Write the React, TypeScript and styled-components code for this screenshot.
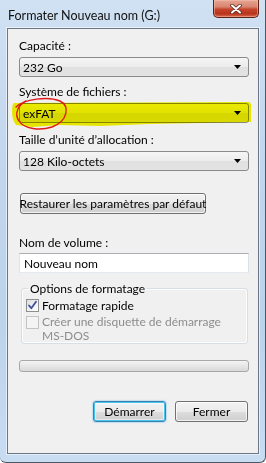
import styled, { createGlobalStyle } from 'styled-components';

const GlobalStyle = createGlobalStyle`
  html, body {
    margin: 0;
    padding: 0;
    background: #ffffff;
  }
  body {
    font-family: Lato, "Open Sans", "Liberation Sans", sans-serif;
    font-size: 12px;
  }
`;

const ComboArrow = () => (
  <svg width="7" height="4" viewBox="0 0 7 4">
    <path d="M0 0 H7 L3.5 4 Z" fill="#000" />
  </svg>
);

const CheckMark = () => (
  <svg width="11" height="11" viewBox="0 0 11 11">
    <path
      d="M2 5.5 L4.3 8.2 L9 1.8"
      fill="none"
      stroke="#3c4fa0"
      strokeWidth="1.8"
      strokeLinecap="round"
      strokeLinejoin="round"
    />
  </svg>
);

const CloseGlyph = () => (
  <svg width="12" height="10" viewBox="0 0 12 10">
    <path
      d="M2 1.5 L10 8.5 M10 1.5 L2 8.5"
      stroke="#5a2a22"
      strokeWidth="3.6"
      strokeLinecap="round"
    />
    <path
      d="M2 1.5 L10 8.5 M10 1.5 L2 8.5"
      stroke="#ffffff"
      strokeWidth="2"
      strokeLinecap="round"
    />
  </svg>
);

const App = () => {
  return (
    <>
      <GlobalStyle />
      <Window>
        <TitleBar>
          <Title>Formater Nouveau nom (G:)</Title>
          <CloseButton>
            <CloseGlyph />
          </CloseButton>
        </TitleBar>
        <Panel>
          <Label>Capacité :</Label>
          <Combo>
            <span>232 Go</span>
            <ComboArrow />
          </Combo>
          <Label $mt={7}>Système de fichiers :</Label>
          <Combo>
            <span>exFAT</span>
            <ComboArrow />
          </Combo>
          <Label $mt={9}>Taille d’unité d’allocation :</Label>
          <Combo>
            <span>128 Kilo-octets</span>
            <ComboArrow />
          </Combo>
          <RestoreRow>
            <Button $width={186}>Restaurer les paramètres par défaut</Button>
          </RestoreRow>
          <Label $mt={21}>Nom de volume :</Label>
          <TextBox>Nouveau nom</TextBox>
          <Group>
            <Legend>Options de formatage</Legend>
            <CheckRow>
              <CheckBox $checked>
                <CheckMark />
              </CheckBox>
              <CheckText>Formatage rapide</CheckText>
            </CheckRow>
            <CheckRow $disabled>
              <CheckBox $disabled />
              <CheckText>
                Créer une disquette de démarrage
                <br />
                MS-DOS
              </CheckText>
            </CheckRow>
          </Group>
          <Progress />
          <ButtonRow>
            <Button $width={73} $default>
              Démarrer
            </Button>
            <Button $width={73}>Fermer</Button>
          </ButtonRow>
        </Panel>
        {/* annotations drawn over the screenshot */}
        <Marks width="266" height="463" viewBox="0 0 266 463">
          <path
            d="M14 103 L249 102 Q252 103 251 110 L251 122 L200 123 L150 124 L100 126 L60 125 L32 127 L16 125 Q12 120 12 112 Q12 104 14 103 Z"
            fill="#f4f400"
            style={{ mixBlendMode: 'multiply' }}
          />
          <path
            d="M16 107 C24 99 48 96 60 101 C70 106 68 121 52 127 C40 131 24 129 19 121 C14 114 18 105 26 101"
            fill="none"
            stroke="#e01818"
            strokeWidth="1.4"
            strokeLinecap="round"
          />
        </Marks>
      </Window>
    </>
  );
};

export default App;

const Window = styled.div`
  position: relative;
  width: 266px;
  height: 463px;
  box-sizing: border-box;
  display: flex;
  flex-direction: column;
  padding: 0 6px 8px 7px;
  background: linear-gradient(180deg, #d0e1f3 0%, #c3d7ee 30%, #bcd3ec 70%, #c8dcf2 100%);
  border-right: 1px solid #4d5866;
  border-bottom: 1px solid #4d5866;
  border-bottom-right-radius: 6px;
  border-bottom-left-radius: 6px;
  overflow: hidden;
  color: #000;
`;

const TitleBar = styled.div`
  height: 28px;
  flex: none;
  display: flex;
  justify-content: space-between;
  align-items: flex-start;
`;

const Title = styled.div`
  padding: 8px 0 0 1px;
  line-height: 15px;
  font-size: 12.5px;
  color: #101010;
`;

const CloseButton = styled.div`
  width: 46px;
  height: 18px;
  box-sizing: border-box;
  border: 1px solid #5b2117;
  border-top: none;
  border-radius: 0 0 5px 5px;
  background: linear-gradient(180deg, #e6a595 0%, #d98570 40%, #c6442c 55%, #b8341d 80%, #d9684a 100%);
  box-shadow: inset 0 0 0 1px rgba(255, 200, 180, 0.45);
  display: flex;
  align-items: center;
  justify-content: center;
`;

const Panel = styled.div`
  flex: 1;
  display: flex;
  flex-direction: column;
  border: 1px solid #6b7785;
  background: #f0f0f0;
  padding: 9px 9px 0 11px;
  box-shadow: 0 0 0 1px rgba(255, 255, 255, 0.55);
`;

const Label = styled.div<{ $mt?: number }>`
  margin-top: ${(p) => p.$mt ?? 0}px;
  height: 15px;
  line-height: 15px;
`;

const Combo = styled.div`
  margin-top: 4px;
  height: 20px;
  box-sizing: border-box;
  display: flex;
  align-items: center;
  justify-content: space-between;
  padding: 0 7px 0 3px;
  border: 1px solid #8a8a8a;
  border-radius: 3px;
  background: linear-gradient(180deg, #f5f5f5 0%, #ececec 50%, #e0e0e0 52%, #e3e3e3 100%);
`;

const RestoreRow = styled.div`
  margin-top: 22px;
  display: flex;
`;

const Button = styled.div<{ $width: number; $default?: boolean }>`
  width: ${(p) => p.$width}px;
  height: 21px;
  box-sizing: border-box;
  display: flex;
  align-items: center;
  justify-content: center;
  white-space: nowrap;
  margin-left: 1px;
  border: 1px solid ${(p) => (p.$default ? '#3c7fb1' : '#707070')};
  border-radius: 3px;
  background: linear-gradient(180deg, #f2f2f2 0%, #ebebeb 50%, #dddddd 51%, #cfcfcf 100%);
  box-shadow: ${(p) =>
    p.$default
      ? 'inset 0 0 0 1px #48c5ef, inset 0 0 0 2px rgba(255,255,255,0.5), 0 0 1px 1px rgba(140,200,235,0.45)'
      : 'inset 0 0 0 1px rgba(255,255,255,0.75)'};
`;

const TextBox = styled.div`
  margin-top: 3px;
  height: 20px;
  box-sizing: border-box;
  display: flex;
  align-items: center;
  padding: 0 4px;
  background: #ffffff;
  border: 1px solid #abadb3;
  border-bottom-color: #e3e9ef;
  border-left-color: #e2e3ea;
  border-right-color: #dbdfe6;
`;

const Group = styled.fieldset`
  margin: 8px 1px 0 2px;
  padding: 2px 6px 1px 4px;
  border: 1px solid #d5dfe5;
  border-radius: 3px;
  box-shadow: inset 0 0 0 1px rgba(255, 255, 255, 0.8);
  display: flex;
  flex-direction: column;
  gap: 2px;
`;

const Legend = styled.legend`
  padding: 0 2px;
  margin-left: 2px;
  line-height: 15px;
`;

const CheckRow = styled.div<{ $disabled?: boolean }>`
  display: flex;
  align-items: flex-start;
  gap: 3px;
  line-height: ${(p) => (p.$disabled ? '13.5px' : '15px')};
  color: ${(p) => (p.$disabled ? '#8d8d8d' : '#000')};
`;

const CheckBox = styled.div<{ $checked?: boolean; $disabled?: boolean }>`
  flex: none;
  width: 13px;
  height: 13px;
  margin-top: 1px;
  box-sizing: border-box;
  display: flex;
  align-items: center;
  justify-content: center;
  border: 1px solid ${(p) => (p.$disabled ? '#c4c4c4' : '#8e8f8f')};
  background: ${(p) =>
    p.$disabled ? '#f4f4f4' : 'linear-gradient(135deg, #dcdcdc 0%, #f4f4f4 60%, #ffffff 100%)'};
`;

const CheckText = styled.div``;

const Progress = styled.div`
  margin-top: 16px;
  height: 12px;
  box-sizing: border-box;
  border: 1px solid #a8a8a8;
  border-radius: 3px;
  background: linear-gradient(180deg, #f4f4f4 0%, #e6e6e6 50%, #d8d8d8 100%);
`;

const ButtonRow = styled.div`
  margin-top: 29px;
  margin-right: 1px;
  display: flex;
  justify-content: flex-end;
  gap: 8px;
`;

const Marks = styled.svg`
  position: absolute;
  left: 0;
  top: 0;
  pointer-events: none;
`;
